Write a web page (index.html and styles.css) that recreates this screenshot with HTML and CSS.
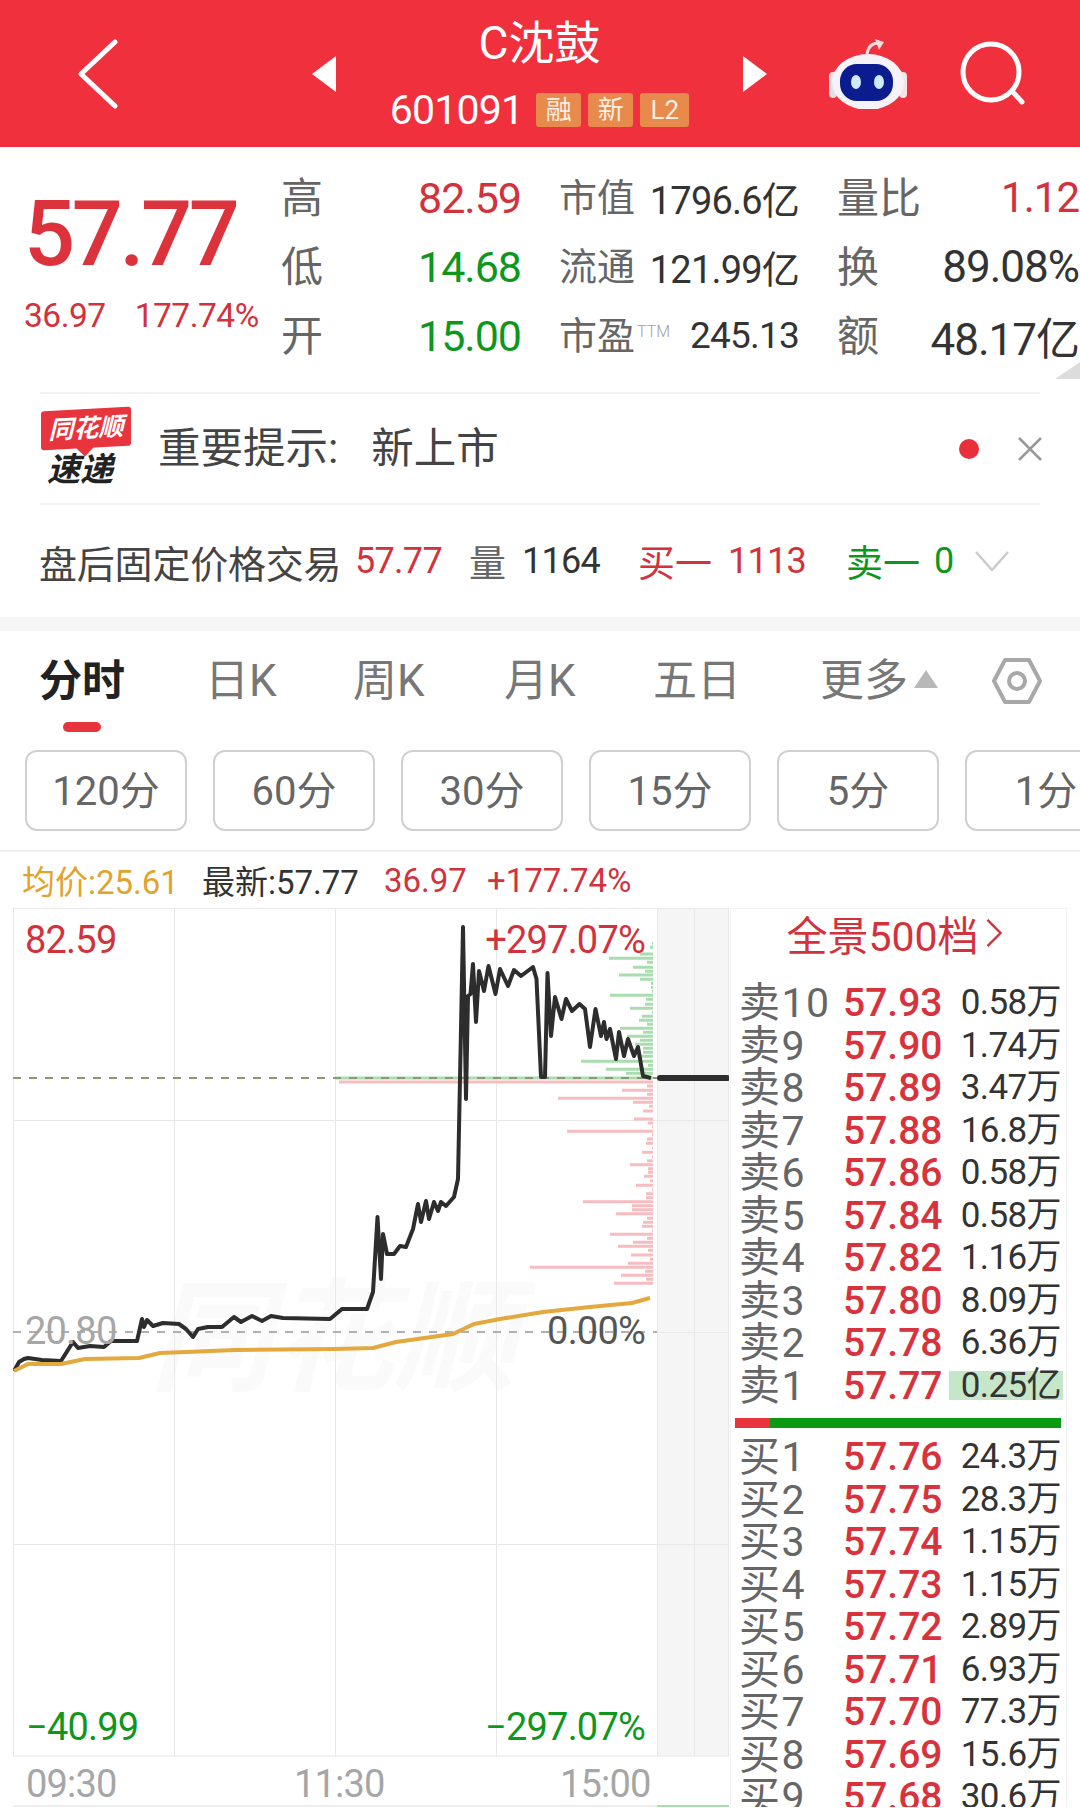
FILE: index.html
```html
<!DOCTYPE html>
<html lang="zh-CN">
<head>
  <meta charset="utf-8" />
  <title>C沈鼓 分时</title>
  <link rel="stylesheet" href="styles.css">
</head>
<body>
  <div class="app">
    <header class="topbar">
      <svg class="back" viewBox="0 0 40 70"><path d="M37 3 3 35l34 32" /></svg>
      <svg class="tri prev" viewBox="0 0 24 36"><path d="M24 0v36L0 18z" /></svg>
      <div class="stock">
        <div class="stock-name">C沈鼓</div>
        <div class="stock-code">
          <span>601091</span>
          <span class="tag first">融</span>
          <span class="tag">新</span>
          <span class="tag wide">L2</span>
        </div>
      </div>
      <svg class="tri next" viewBox="0 0 24 36"><path d="M0 0v36l24-18z" /></svg>
      <svg class="robot" viewBox="0 0 78 70">
        <path d="M38 15c1-7 5-11 12-11" fill="none" stroke="#f9d9d9" stroke-width="3" />
        <path d="M46 0l9 3-5 8z" fill="#f9d9d9" />
        <rect x="0" y="33" width="8" height="26" rx="4" fill="#e3dfe6" />
        <rect x="70" y="33" width="8" height="26" rx="4" fill="#f5e4e4" />
        <ellipse cx="39" cy="43" rx="36" ry="28" fill="#f5f3f7" />
        <rect x="11" y="25" width="53" height="37" rx="17" fill="#0a1c8e" />
        <ellipse cx="27" cy="43" rx="5" ry="7" fill="#cfeafc" />
        <ellipse cx="50" cy="43" rx="5" ry="7" fill="#cfeafc" />
      </svg>
      <svg class="search" viewBox="0 0 66 66"><circle cx="31" cy="31" r="28" /><path d="M52 50l10 11" /></svg>
    </header>

    <section class="quote">
      <div class="last">
        <div class="last-price">57.77</div>
        <div class="last-change"><span>36.97</span><span>177.74%</span></div>
      </div>
      <div class="stats">
        <div class="stat"><span class="lbl">高</span><span class="val up">82.59</span></div>
        <div class="stat mid"><span class="lbl">市值</span><span class="val">1796.6亿</span></div>
        <div class="stat wide-col"><span class="lbl">量比</span><span class="val up small">1.12</span></div>
        <div class="stat"><span class="lbl">低</span><span class="val down">14.68</span></div>
        <div class="stat mid"><span class="lbl">流通</span><span class="val">121.99亿</span></div>
        <div class="stat wide-col"><span class="lbl">换</span><span class="val">89.08%</span></div>
        <div class="stat"><span class="lbl">开</span><span class="val down">15.00</span></div>
        <div class="stat mid"><span class="lbl">市盈<sup>TTM</sup></span><span class="val tight">245.13</span></div>
        <div class="stat wide-col"><span class="lbl">额</span><span class="val">48.17亿</span></div>
      </div>
      <svg class="corner" viewBox="0 0 25 17"><path d="M25 0v17H0z" /></svg>
    </section>

    <section class="notice">
      <div class="logo">
        <div class="logo-top">同花顺</div>
        <div class="logo-sub">速递</div>
      </div>
      <div class="notice-text"><span>重要提示:</span><span class="notice-val">新上市</span></div>
      <span class="dot"></span>
      <svg class="close" viewBox="0 0 24 24"><path d="M1 1l22 22M23 1 1 23" /></svg>
    </section>

    <section class="after">
      <span class="after-name">盘后固定价格交易</span>
      <span class="num up">57.77</span>
      <span class="after-lbl">量</span>
      <span class="num dark">1164</span>
      <span class="after-lbl up">买一</span>
      <span class="num up">1113</span>
      <span class="after-lbl down">卖一</span>
      <span class="num down">0</span>
      <svg class="chev" viewBox="0 0 34 20"><path d="M1 1l16 18L33 1" /></svg>
    </section>

    <div class="band"></div>

    <nav class="tabs">
      <span class="tab active">分时</span>
      <span class="tab">日K</span>
      <span class="tab">周K</span>
      <span class="tab">月K</span>
      <span class="tab">五日</span>
      <span class="tab more">更多<i class="caret"></i></span>
      <svg class="hex" viewBox="0 0 50 48">
        <path d="M13 3h24l11 21-11 21H13L2 24z" />
        <circle cx="25" cy="24" r="8" />
      </svg>
    </nav>

    <div class="periods">
      <span class="period">120分</span>
      <span class="period">60分</span>
      <span class="period">30分</span>
      <span class="period">15分</span>
      <span class="period">5分</span>
      <span class="period">1分</span>
    </div>

    <div class="legend">
      <span class="avg">均价:25.61</span>
      <span class="dark">最新:57.77</span>
      <span class="up">36.97</span>
      <span class="up">+177.74%</span>
    </div>

    <div class="main">
      <svg class="chart" viewBox="13 909 716 899" width="716" height="899">
        <rect x="657" y="909" width="72" height="848" fill="#f5f5f5" />
        <text class="mark" x="150" y="1382">同花顺</text>
        <path class="grid" d="M13.5 909v848M174.5 909v848M335.5 909v848M496.5 909v848M657.5 909v848M694.5 909v848M728.5 909v848M13 909.5h716M13 1121.5h716M657 1333.5h72M13 1545.5h716M13 1757h716" />

        <path class="bars-green" d="M652 944.3H653M650 948.3H653M640 955H653M609 959.3H653M647 963.3H653M633 968.3H653M645 972.3H653M619 976H653M640 980.3H653M651 984.3H653M651 988.3H653M652 992.3H653M610 996.3H653M646 1000.3H653M645 1005.3H653M630 1009.3H653M652 1013.3H653M642 1017.3H653M639 1021.3H653M647 1025.3H653M620 1029.3H653M643 1033.3H653M627 1037.3H653M640 1041.3H653M635 1045.3H653M643 1049.3H653M643 1053.3H653M637 1057.3H653M581 1062.3H653M648 1066.3H653M606 1070.3H653M626 1074.3H653M335 1079H653" />
        <path class="bars-red" d="M339 1083H653M647 1087H653M622 1091.3H653M647 1095.3H653M558 1099.3H653M633 1103.3H653M649 1107.3H653M643 1112H653M634 1120H653M648 1124H653M652 1128H653M567 1132.3H653M652 1136H653M647 1140H653M646 1144.3H653M652 1149.3H653M642 1153.3H653M652 1157.7H653M647 1161.7H653M630 1165.7H653M648 1169.7H653M648 1173.3H653M644 1177.3H653M650 1181.7H653M636 1186.3H653M652 1190.7H653M646 1194.7H653M646 1198.7H653M583 1202.7H653M632 1206.7H653M632 1210.7H653M616 1214.7H653M647 1219.3H653M643 1223.3H653M642 1227.3H653M652 1231.7H653M610 1235.3H653M647 1239.3H653M633 1243.3H653M618 1247.3H653M648 1251.3H653M631 1256H653M650 1260.3H653M628 1264.3H653M530 1268.3H653M645 1272.3H653M621 1276.3H653M646 1280.3H653M614 1284.3H653" />

        <path class="dash-price" d="M13 1079H657" />
        <path class="dash-base" d="M13 1333H657" />

        <polyline class="line-price" points="14,1372 19,1363 24,1360 28,1359 42,1361 61,1362 73,1343 78,1349 90,1347 104,1348 111,1342 137,1342 142,1320 144,1328 147,1321 153,1327 163,1324 179,1325 186,1330 193,1338 198,1330 208,1328 222,1328 234,1318 241,1323 252,1317 262,1322 271,1317 283,1319 330,1320 342,1310 367,1310 373,1293 377.5,1218 381,1280 383,1235 387,1255 394,1255 400,1247 406,1248 413,1230 418,1205 421,1223 426,1202 429,1220 434,1203 438,1212 441,1203 446,1207 454,1198 458,1180 460,1080 463,928 466,1100 468,997 470.5,995 473,965 476,1023 479,972 484,992 488.5,967 495.5,995 500,970 508,987 514,971 521,977 533,968 536.5,980 541,1078 545,1078 547.5,974 551,1037 555,998 561.5,1020 566,1000 572,1012 579.5,1005 585,1010 590,1048 595.5,1010 601,1037 604,1023 606.5,1040 610,1030 616,1060 619,1033 624,1057 628,1040 634,1057 638,1048 643,1077 651,1079" />
        <polyline class="line-avg" points="14,1372 28,1365 61,1365 85,1360 139,1359 160,1354 236,1351 335,1350 373,1349 396,1343 453,1335 474,1325 500,1320 543,1313 590,1308 632,1304 650,1299" />
        <path class="line-now" d="M660 1079H727" />

        <text class="axis up" x="25" y="954">82.59</text>
        <text class="axis up" x="645" y="954" text-anchor="end">+297.07%</text>
        <text class="axis faint" x="25" y="1345">20.80</text>
        <text class="axis grey" x="645" y="1345" text-anchor="end">0.00%</text>
        <text class="axis down" x="26" y="1741">−40.99</text>
        <text class="axis down" x="645" y="1741" text-anchor="end">−297.07%</text>
        <text class="axis faint" x="26" y="1798">09:30</text>
        <text class="axis faint" x="294" y="1798">11:30</text>
        <text class="axis faint" x="560" y="1798">15:00</text>
        <path class="foot" d="M13 1807H657" />
        <path class="foot-green" d="M657 1807H729" />
      </svg>

      <aside class="book">
        <div class="book-title">全景500档<svg viewBox="0 0 18 32"><path d="M2 2l14 14L2 30" /></svg></div>
        <div class="row"><span class="side">卖10</span><span class="price">57.93</span><span class="qty">0.58万</span></div>
        <div class="row"><span class="side">卖9</span><span class="price">57.90</span><span class="qty">1.74万</span></div>
        <div class="row"><span class="side">卖8</span><span class="price">57.89</span><span class="qty">3.47万</span></div>
        <div class="row"><span class="side">卖7</span><span class="price">57.88</span><span class="qty">16.8万</span></div>
        <div class="row"><span class="side">卖6</span><span class="price">57.86</span><span class="qty">0.58万</span></div>
        <div class="row"><span class="side">卖5</span><span class="price">57.84</span><span class="qty">0.58万</span></div>
        <div class="row"><span class="side">卖4</span><span class="price">57.82</span><span class="qty">1.16万</span></div>
        <div class="row"><span class="side">卖3</span><span class="price">57.80</span><span class="qty">8.09万</span></div>
        <div class="row"><span class="side">卖2</span><span class="price">57.78</span><span class="qty">6.36万</span></div>
        <div class="row"><span class="side">卖1</span><span class="price">57.77</span><span class="qty hl">0.25亿</span></div>
        <div class="ratio"><span class="ratio-buy"></span><span class="ratio-sell"></span></div>
        <div class="row"><span class="side">买1</span><span class="price">57.76</span><span class="qty">24.3万</span></div>
        <div class="row"><span class="side">买2</span><span class="price">57.75</span><span class="qty">28.3万</span></div>
        <div class="row"><span class="side">买3</span><span class="price">57.74</span><span class="qty">1.15万</span></div>
        <div class="row"><span class="side">买4</span><span class="price">57.73</span><span class="qty">1.15万</span></div>
        <div class="row"><span class="side">买5</span><span class="price">57.72</span><span class="qty">2.89万</span></div>
        <div class="row"><span class="side">买6</span><span class="price">57.71</span><span class="qty">6.93万</span></div>
        <div class="row"><span class="side">买7</span><span class="price">57.70</span><span class="qty">77.3万</span></div>
        <div class="row"><span class="side">买8</span><span class="price">57.69</span><span class="qty">15.6万</span></div>
        <div class="row"><span class="side">买9</span><span class="price">57.68</span><span class="qty">30.6万</span></div>
      </aside>
    </div>
  </div>
</body>
</html>
```

FILE: styles.css
```css
:root{
  --red:#f0303c;
  --up:#d2323c;
  --down:#0f961c;
  --text:#333;
  --muted:#666;
  --faint:#a0a0a0;
  --line:#eeeeee;
}

* { box-sizing: border-box; }

html, body { margin:0; background:#fff; }

body{
  font-family: Roboto, "Noto Sans CJK SC", sans-serif;
  color:var(--text);
}

.app{ width:1080px; height:1808px; overflow:hidden; }

.up{ color:var(--up); fill:var(--up); }
.down{ color:var(--down); fill:var(--down); }
.dark{ color:var(--text); }

/* top bar */
.topbar{ display:flex; align-items:center; height:147px; padding-left:78px; background:var(--red); }
.back{ width:40px; height:70px; fill:none; stroke:#fff; stroke-width:5; stroke-linecap:round; stroke-linejoin:round; }
.tri{ width:24px; height:36px; fill:#fff; }
.prev{ margin-left:194px; }
.stock{ display:flex; flex-direction:column; align-items:center; gap:19px; width:407px; height:147px; padding-top:15px; color:#fff; }
.stock-name{ font-size:46px; line-height:56px; }
.stock-code{ display:flex; align-items:center; height:40px; font-size:41px; letter-spacing:-.8px; }
.tag{ width:45px; height:34px; margin-left:7px; border-radius:3px; background:#e88a4c; color:#fbeee0; font-size:26px; line-height:34px; letter-spacing:0; text-align:center; }
.tag.first{ margin-left:13px; }
.tag.wide{ width:49px; }
.robot{ width:78px; height:70px; margin-left:62px; }
.search{ width:66px; height:66px; margin-left:53px; fill:none; stroke:#fff; stroke-width:5; stroke-linecap:round; }

/* quote */
.quote{ position:relative; display:flex; height:245px; padding-top:16px; }
.last{ width:283px; padding-left:24px; }
.last-price{ margin-top:24px; color:#dc323c; font-size:90px; font-weight:500; line-height:96px; letter-spacing:-3.4px; }
.last-change{ display:flex; gap:29px; margin-top:13px; color:var(--up); font-size:33.5px; line-height:40px; letter-spacing:-.5px; }
.stats{ display:grid; grid-template-columns:238px 238px 240px; grid-auto-rows:69px; column-gap:40px; width:797px; }
.stat{ display:flex; align-items:center; justify-content:space-between; }
.stat.mid{ justify-content:flex-start; }
.stat.mid .val{ margin-left:auto; font-size:38px; letter-spacing:-.8px; }
.stat.mid .val.tight{ font-size:37px; letter-spacing:-.8px; }
.lbl{ margin:0 0 6px -2px; color:var(--muted); font-size:42px; }
.mid .lbl{ font-size:38px; }
.lbl sup{ margin-left:2px; color:var(--faint); font-size:16px; font-weight:300; vertical-align:12px; line-height:0; }
.val{ font-size:43px; letter-spacing:-1px; white-space:nowrap; }
.wide-col .val{ font-size:44px; letter-spacing:-1px; }
.wide-col .val.small{ font-size:42px; }
.val.up{ color:var(--up); }
.val.down{ color:var(--down); }
.corner{ position:absolute; right:0; bottom:13px; width:25px; height:17px; fill:#dcdcdc; }

/* notice */
.notice{ display:flex; align-items:center; height:113px; margin:0 40px; border-top:2px solid #f3f3f3; border-bottom:2px solid #f3f3f3; }
.logo{ display:flex; flex-direction:column; align-items:center; width:92px; }
.logo-top{ position:relative; width:90px; height:39px; border-radius:3px; background:#e8343c; color:#fff; font-size:25px; font-style:italic; font-weight:700; line-height:39px; text-align:center; transform:skewY(-3deg); }
.logo-top::after{ content:""; position:absolute; left:38px; bottom:-6px; width:12px; height:12px; background:#e8343c; transform:rotate(45deg); }
.logo-sub{ margin:3px 12px 0 0; color:#222; font-size:33px; font-style:italic; font-weight:700; line-height:38px; }
.notice-text{ display:flex; margin-left:26px; color:#444; font-size:42.5px; line-height:50px; }
.notice-val{ margin-left:33px; }
.dot{ width:20px; height:20px; margin-left:auto; border-radius:50%; background:#e8303a; }
.close{ width:24px; height:24px; margin-left:39px; margin-right:-2px; fill:none; stroke:#999; stroke-width:2.5; }

/* after hours row */
.after{ display:grid; grid-template-columns:316px 114px 53px 116px 90px 118px 88px 41px 34px; align-items:center; height:112px; padding-left:39px; font-size:37px; white-space:nowrap; }
.after-name{ color:#444; font-size:38px; letter-spacing:-.2px; }
.after-lbl{ color:var(--muted); }
.after-lbl.up{ color:var(--up); }
.after-lbl.down{ color:var(--down); }
.after .num{ font-size:36px; letter-spacing:-.7px; }
.chev{ width:34px; height:20px; fill:none; stroke:#ccc; stroke-width:2.5; }

.band{ height:14px; background:#f6f6f6; }

/* tabs */
.tabs{ display:grid; grid-template-columns:166px 148px 151px 149px 167px 172px 50px; align-items:center; height:100px; padding-left:39px; color:#777; font-size:44px; line-height:54px; }
.tab{ position:relative; white-space:nowrap; }
.tab.active{ color:#222; font-size:43px; font-weight:700; }
.tab.active::after{ content:""; position:absolute; left:24px; top:68px; width:38px; height:10px; border-radius:5px; background:#e8343c; }
.caret{ display:inline-block; margin-left:6px; border-left:12px solid transparent; border-right:12px solid transparent; border-bottom:18px solid #b8b8b8; vertical-align:8px; }
.hex{ width:50px; height:48px; fill:none; stroke:#a8a8a8; stroke-width:4; stroke-linejoin:round; }

.periods{ display:flex; gap:26px; height:121px; padding:19px 0 0 25px; border-bottom:2px solid var(--line); overflow:hidden; }
.period{ flex:0 0 162px; height:81px; border:2px solid #d0d0d0; border-radius:12px; color:#666; font-size:40px; line-height:79px; text-align:center; }

.legend{ display:grid; grid-template-columns:180px 182px 103px auto; align-items:center; justify-content:start; height:56px; padding-left:22px; font-size:33px; white-space:nowrap; }
.avg{ color:#e2a32e; }

/* chart */
.main{ display:flex; height:899px; padding-left:13px; }
.chart{ flex:0 0 716px; display:block; }
.grid{ fill:none; stroke:#e8e8e8; stroke-width:1; }
.mark{ fill:#fafafa; font-size:122px; font-style:italic; font-weight:700; }
.bars-green{ fill:none; stroke:#a9dcae; stroke-width:3; }
.bars-red{ fill:none; stroke:#f6bcc0; stroke-width:3; }
.dash-price{ fill:none; stroke:#8c9a70; stroke-width:2; stroke-dasharray:8 8; }
.dash-base{ fill:none; stroke:#b0b0b0; stroke-width:2; stroke-dasharray:8 8; }
.line-price{ fill:none; stroke:#2d2d2d; stroke-width:4; stroke-linejoin:round; }
.line-avg{ fill:none; stroke:#e3a83e; stroke-width:4; stroke-linejoin:round; }
.line-now{ fill:none; stroke:#2d2d2d; stroke-width:6; stroke-linecap:round; }
.axis{ font-size:38px; letter-spacing:-.8px; }
.axis.faint{ fill:#a6a6a6; }
.axis.grey{ fill:#555; }
.foot{ fill:none; stroke:#eee; stroke-width:2; }
.foot-green{ fill:none; stroke:#a9dcae; stroke-width:2; }

/* order book */
.book{ flex:0 0 337px; height:899px; margin-left:1px; border:1px solid #f2f2f2; border-bottom:0; overflow:hidden; }
.book-title{ display:flex; align-items:center; justify-content:center; gap:6px; height:73px; padding:0 8px 26px 0; color:var(--up); font-size:41px; }
.book-title svg{ width:18px; height:30px; fill:none; stroke:var(--up); stroke-width:2.5; }
.row{ display:grid; grid-template-columns:104px 100px 1fr; align-items:center; height:42.5px; padding:0 5px 0 8px; line-height:42.5px; white-space:nowrap; }
.side{ color:var(--muted); font-size:41px; letter-spacing:1.5px; }
.price{ color:#d8323c; font-size:39px; font-weight:500; }
.qty{ color:var(--text); font-size:35px; letter-spacing:-.6px; text-align:right; }
.qty.hl{ height:29px; margin:0 -2px 0 6px; padding-right:2px; background:#c6e6ca; line-height:29px; }
.ratio{ display:flex; height:10px; margin:11px 5px 8px 4px; }
.ratio-buy{ flex:0 0 35px; background:#e8343c; }
.ratio-sell{ flex:1; background:#0a9a10; }
```
